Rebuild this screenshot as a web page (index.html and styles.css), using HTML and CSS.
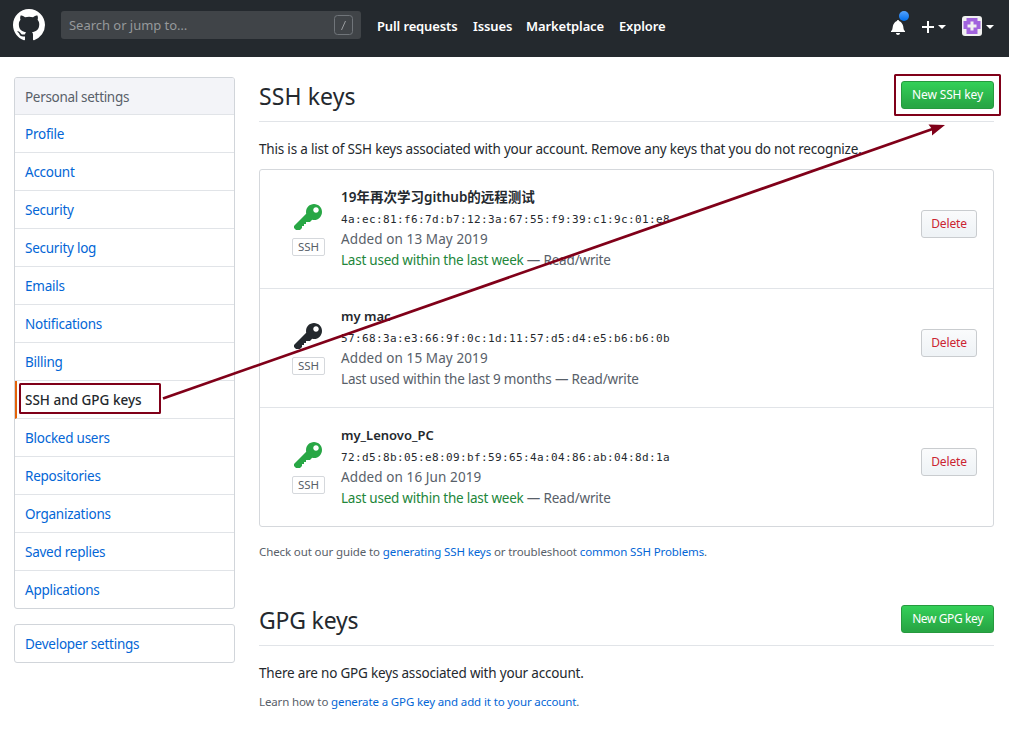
FILE: index.html
```html
<!DOCTYPE html>
<html lang="en">
<head>
<meta charset="utf-8">
<title>SSH and GPG keys</title>
<link rel="stylesheet" href="styles.css">
</head>
<body>
<svg class="defs" width="0" height="0" aria-hidden="true">
  <symbol id="key" viewBox="0 0 14 16"><path fill-rule="evenodd" d="M12.83 2.17C12.08 1.42 11.14 1.03 10 1c-1.13.03-2.08.42-2.83 1.17S6.04 3.86 6.01 5c0 .3.03.59.09.89L0 12v1l1 1h2l1-1v-1h1v-1h1v-1h2l1.09-1.11c.3.08.59.11.91.11 1.14-.03 2.08-.42 2.83-1.17S13.97 6.14 14 5c-.03-1.14-.42-2.08-1.17-2.83zM11 5.38c-.77 0-1.38-.61-1.38-1.38 0-.77.61-1.38 1.38-1.38.77 0 1.38.61 1.38 1.38 0 .77-.61 1.38-1.38 1.38z"/></symbol>
</svg>
<header class="header">
  <svg class="logo" width="32" height="32" viewBox="0 0 16 16"><path fill="#fff" fill-rule="evenodd" d="M8 0C3.58 0 0 3.58 0 8c0 3.54 2.29 6.53 5.47 7.59.4.07.55-.17.55-.38 0-.19-.01-.82-.01-1.49-2.01.37-2.53-.49-2.69-.94-.09-.23-.48-.94-.82-1.13-.28-.15-.68-.52-.01-.53.63-.01 1.08.58 1.23.82.72 1.21 1.87.87 2.33.66.07-.52.28-.87.51-1.07-1.78-.2-3.64-.89-3.64-3.95 0-.87.31-1.59.82-2.15-.08-.2-.36-1.02.08-2.12 0 0 .67-.21 2.2.82.64-.18 1.32-.27 2-.27.68 0 1.36.09 2 .27 1.53-1.04 2.2-.82 2.2-.82.44 1.1.16 1.92.08 2.12.51.56.82 1.27.82 2.15 0 3.07-1.87 3.75-3.65 3.95.29.25.54.73.54 1.48 0 1.07-.01 1.93-.01 2.2 0 .21.15.46.55.38A8.013 8.013 0 0 0 16 8c0-4.42-3.58-8-8-8z"/></svg>
  <div class="search"><span class="search-text">Search or jump to…</span>
    <svg class="slash" width="19" height="20" viewBox="0 0 19 20"><rect x=".5" y=".5" width="18" height="19" rx="3" fill="none" stroke="#70757a"/><path d="M11.5 6 7.5 15" fill="none" stroke="#9a9da0"/></svg>
  </div>
  <nav class="nav"><a class="n1">Pull requests</a><a class="n2">Issues</a><a class="n3">Marketplace</a><a class="n4">Explore</a></nav>
  <div class="tools">
    <div class="bell"><svg width="14" height="16" viewBox="0 0 14 16"><path fill="#fff" fill-rule="evenodd" d="M14 12v1H0v-1l.73-.58c.77-.77.81-2.55 1.19-4.42C2.69 3.23 6 2 6 2c0-.55.45-1 1-1s1 .45 1 1c0 0 3.39 1.23 4.16 5 .38 1.88.42 3.66 1.19 4.42l.66.58H14zm-7 4c1.110 0 2-.89 2-2H5c0 1.110.89 2 2 2z"/></svg><i class="dot"></i></div>
    <div class="plus"><svg width="12" height="12" viewBox="0 0 12 12"><path d="M6 0v12M0 6h12" stroke="#fff" stroke-width="2"/></svg><i class="caret"></i></div>
    <div class="user"><svg width="20" height="20" viewBox="0 0 20 20"><rect width="20" height="20" rx="3" fill="#f0f0f0"/><path fill="#a163dd" fill-rule="evenodd" d="M4.500 2h11v3H18.500v8h-3v5h-11v-5h-3V5h3zM8.500 5.500V8.500H5.500v3h3v3h3v-3h3V8.500h-3V5.500z"/></svg><i class="caret"></i></div>
  </div>
</header>
<div class="page">
  <aside class="side">
    <nav class="menu">
      <h3 class="menu-head">Personal settings</h3>
      <a>Profile</a><a>Account</a><a>Security</a><a>Security log</a><a>Emails</a><a>Notifications</a><a>Billing</a><a class="selected">SSH and GPG keys</a><a>Blocked users</a><a>Repositories</a><a>Organizations</a><a>Saved replies</a><a>Applications</a>
    </nav>
    <nav class="menu"><a>Developer settings</a></nav>
  </aside>
  <main class="main">
    <div class="subhead"><h2>SSH keys</h2><button class="btn primary">New SSH key</button></div>
    <p class="intro">This is a list of SSH keys associated with your account. Remove any keys that you do not recognize.</p>
    <ul class="keys">
      <li>
        <div class="kind"><svg class="green" width="28" height="32"><use href="#key"/></svg><span class="tag">SSH</span></div>
        <div class="info"><strong class="cjk">19年再次学习github的远程测试</strong><code>4a:ec:81:f6:7d:b7:12:3a:67:55:f9:39:c1:9c:01:e8</code><span class="added">Added on 13 May 2019</span><span class="used"><em>Last used within the last week</em> — Read/write</span></div>
        <button class="btn danger">Delete</button>
      </li>
      <li>
        <div class="kind"><svg width="28" height="32"><use href="#key"/></svg><span class="tag">SSH</span></div>
        <div class="info"><strong>my mac</strong><code>57:68:3a:e3:66:9f:0c:1d:11:57:d5:d4:e5:b6:b6:0b</code><span class="added">Added on 15 May 2019</span><span class="used">Last used within the last 9 months — Read/write</span></div>
        <button class="btn danger">Delete</button>
      </li>
      <li>
        <div class="kind"><svg class="green" width="28" height="32"><use href="#key"/></svg><span class="tag">SSH</span></div>
        <div class="info"><strong>my_Lenovo_PC</strong><code>72:d5:8b:05:e8:09:bf:59:65:4a:04:86:ab:04:8d:1a</code><span class="added">Added on 16 Jun 2019</span><span class="used"><em>Last used within the last week</em> — Read/write</span></div>
        <button class="btn danger">Delete</button>
      </li>
    </ul>
    <p class="help">Check out our guide to <a>generating SSH keys</a> or troubleshoot <a>common SSH Problems</a>.</p>
    <div class="subhead gpg"><h2>GPG keys</h2><button class="btn primary">New GPG key</button></div>
    <p class="intro">There are no GPG keys associated with your account.</p>
    <p class="help last">Learn how to <a>generate a GPG key and add it to your account</a>.</p>
  </main>
</div>
<svg class="marks" width="1009" height="730" viewBox="0 0 1009 730" fill="none" stroke="#800019" stroke-width="2">
  <rect x="20" y="384" width="140" height="29" rx=".5"/>
  <rect x="895" y="75" width="105" height="40" rx=".5"/>
  <path d="M163 398.500 934 128.500" stroke-width="2.700"/>
  <path d="M945 125 928.500 124.500 932 129 932 135.500z" fill="#800019" stroke="none"/>
</svg>
</body>
</html>
```
FILE: styles.css
```css
* { box-sizing: border-box; }
body { margin: 0; width: 1009px; height: 730px; overflow: hidden; position: relative; background: #fff; color: #24292e; font: 13.5px/21px "Noto Sans", "Noto Sans CJK SC", sans-serif; }
h2, h3, p, ul { margin: 0; padding: 0; font-weight: 400; }
a { color: #0366d6; }
.defs { position: absolute; }
.header { height: 57px; background: #24292e; display: flex; padding: 9px 15px 0 13px; }
.logo { flex: none; }
.search { width: 300px; height: 28px; margin: 2px 0 0 16px; padding: 0 8px; border-radius: 3px; background: #404448; color: #96999b; display: flex; align-items: center; justify-content: space-between; }
.search-text { font-size: 13px; letter-spacing: -.03px; }
.nav { display: flex; margin: 7px 0 0 16px; gap: 15px; }
.nav a { color: #fff; font-weight: 600; font-size: 13px; letter-spacing: -.13px; white-space: nowrap; }
.n1 { width: 81px; } .n2 { width: 38px; } .n3 { width: 78px; } .n4 { width: 47px; }
.tools { display: flex; margin-left: auto; height: 36px; align-items: center; }
.bell { position: relative; width: 14px; height: 16px; margin-right: 17px; }
.bell svg { display: block; }
.dot { position: absolute; left: 8px; top: -8px; width: 10px; height: 10px; border-radius: 50%; background: linear-gradient(#54a3ff, #006eed); }
.plus, .user { display: flex; align-items: center; gap: 4px; }
.plus { margin-right: 16px; }
.user svg { margin-top: -2px; }
.caret { width: 8px; border: 4px solid transparent; border-top-color: #fff; border-bottom: 0; }
.page { display: flex; padding: 20px 15px 0 14px; gap: 24px; }
.side { width: 221px; flex: none; }
.menu { border: 1px solid #d1d5da; border-radius: 3px; margin-bottom: 15px; overflow: hidden; }
.menu > * { display: block; height: 38px; padding: 9px 10px 7px; border-bottom: 1px solid #e1e4e8; font-size: 13.5px; letter-spacing: -.25px; }
.menu > :first-child { height: 37px; }
.menu > :last-child { border-bottom: 0; height: 37px; }
.menu .menu-head { background: #f3f4f8; color: #586069; letter-spacing: -.31px; }
.menu .selected { color: #24292e; font-weight: 500; letter-spacing: 0; border-left: 2px solid #e36209; padding-left: 8px; }
.main { width: 735px; }
.subhead { display: flex; justify-content: space-between; align-items: flex-start; height: 45px; border-bottom: 1px solid #e1e4e8; padding-top: 4px; }
.subhead h2 { font-size: 23px; line-height: 30px; letter-spacing: .1px; }
.gpg h2 { letter-spacing: -.2px; }
.btn { height: 28px; border-radius: 3px; font: 400 12px/18px "Noto Sans", sans-serif; letter-spacing: -.15px; padding: 4px 0; }
.primary { width: 93px; color: #fff; border: 1px solid #269a3e; background: linear-gradient(#34d058, #28a745 90%); }
.gpg .primary { letter-spacing: -.4px; }
.danger { width: 56px; color: #cb2431; border: 1px solid #c9cccf; background: linear-gradient(#fafbfc, #eff3f6 90%); margin-right: 16px; }
.intro { margin-top: 17px; letter-spacing: -.19px; white-space: nowrap; }
.keys { list-style: none; margin-top: 9px; border: 1px solid #d5d8dc; border-radius: 3px; height: 358px; }
.keys li { display: flex; align-items: flex-start; height: 119px; padding-top: 17px; border-bottom: 1px solid #e1e4e8; }
.keys li:last-child { border-bottom: 0; height: 118px; }
.keys .btn { margin-top: 23px; }
.kind { width: 33px; margin: 15px 0 0 32px; display: flex; flex-direction: column; align-items: flex-start; }
.kind svg { fill: #24292e; display: block; margin-left: 2px; }
.kind .green { fill: #28a745; }
.tag { width: 33px; height: 18px; margin-top: 4px; border: 1px solid #d5d8dc; border-radius: 2px; font-size: 11.5px; line-height: 16px; text-align: center; color: #586069; }
.info { margin-left: 16px; flex: 1; color: #586069; white-space: nowrap; }
.info > * { display: block; height: 21px; }
.info strong { color: #24292e; font-size: 13px; font-weight: 600; }
.info .cjk { font-size: 13.5px; }
.info code { color: #24292e; font: 11px/23px "DejaVu Sans Mono", monospace; letter-spacing: .378px; }
.info em { font-style: normal; color: #22863a; letter-spacing: -.24px; }
.added { letter-spacing: .1px; }
.used { letter-spacing: -.18px; }
.help { font-size: 11.5px; line-height: 18px; letter-spacing: -.11px; margin-top: 16px; color: #586069; white-space: nowrap; }
.gpg { margin-top: 40px; }
.last { margin-top: 9px; letter-spacing: -.13px; }
.marks { position: absolute; left: 0; top: 0; pointer-events: none; }
```
